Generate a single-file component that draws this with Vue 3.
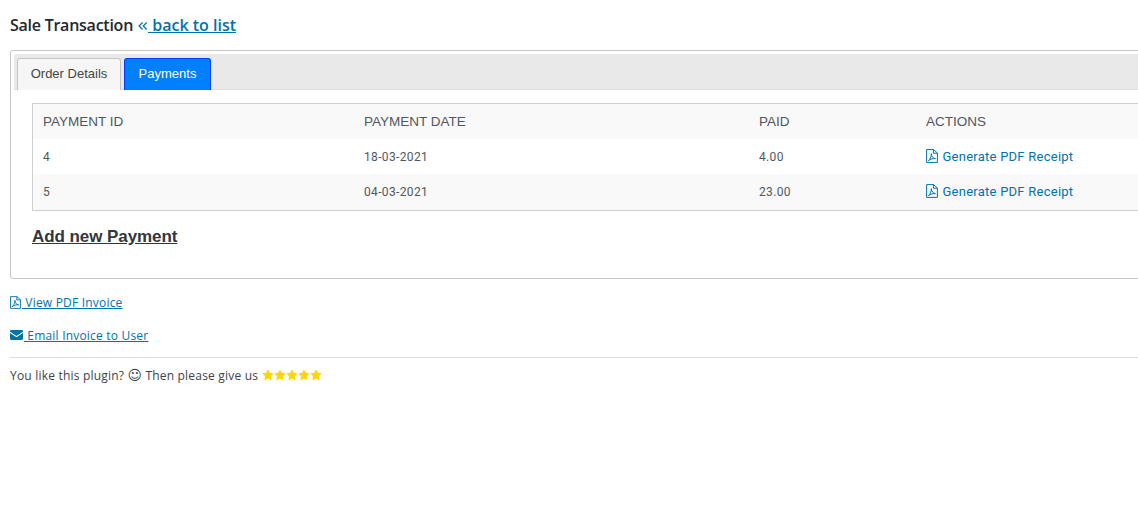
<template>
  <div class="page">
    <h2 class="title">
      <span class="label">Sale Transaction</span>
      <a href="#" class="back"><svg class="chev" viewBox="0 0 10 10"><path d="M4.600 1.500 1 5l3.600 3.500M8.800 1.500 5.200 5l3.600 3.500" /></svg> back to list</a>
    </h2>

    <div class="panel">
      <div class="tabs">
        <button
          v-for="tab in tabs"
          :key="tab"
          class="tab"
          :class="{ active: tab === activeTab }"
          @click="activeTab = tab"
        >
          {{ tab }}
        </button>
      </div>

      <div class="tab-body">
        <table class="grid">
          <thead>
            <tr>
              <th class="c1">PAYMENT ID</th>
              <th class="c2">PAYMENT DATE</th>
              <th class="c3">PAID</th>
              <th>ACTIONS</th>
            </tr>
          </thead>
          <tbody>
            <tr v-for="p in payments" :key="p.id">
              <td>{{ p.id }}</td>
              <td>{{ p.date }}</td>
              <td>{{ p.paid }}</td>
              <td>
                <a href="#" class="receipt">
                  <svg class="pdf" viewBox="0 0 12 14">
                    <path d="M.6.6h7l3.800 3.400v9.400H.6z M7.400.6v3.600h4" />
                    <path d="M2.400 11.600c1.600-1 3-4 3-7 0 3 1.600 4.600 4 5-2.500-.2-5 .4-7 2z" />
                  </svg>
                  Generate PDF Receipt
                </a>
              </td>
            </tr>
          </tbody>
        </table>

        <a href="#" class="add">Add new Payment</a>
      </div>
    </div>

    <p class="line first">
      <a href="#"><svg class="pdf small" viewBox="0 0 12 14">
        <path d="M.6.6h7l3.800 3.400v9.400H.6z M7.400.6v3.600h4" />
        <path d="M2.400 11.600c1.600-1 3-4 3-7 0 3 1.600 4.600 4 5-2.500-.2-5 .4-7 2z" />
      </svg> View PDF Invoice</a>
    </p>
    <p class="line second">
      <a href="#"><svg class="mail" viewBox="0 0 13 10">
        <path d="M0 1.200C0 .5.500 0 1.200 0h10.600c.7 0 1.200.5 1.200 1.200v.5L6.500 6 0 1.700z" />
        <path d="M0 3v5.800c0 .7.500 1.200 1.200 1.200h10.600c.7 0 1.200-.5 1.200-1.200V3L6.500 7.300z" />
      </svg> Email Invoice to User</a>
    </p>
    <hr class="rule" />
    <p class="thanks">
      You like this plugin?
      <span class="smile">☺</span>
      Then please give us
      <span class="stars">
        <svg v-for="n in 5" :key="n" class="star" viewBox="0 0 12 12">
          <path d="M6 .2l1.800 3.600 4.100.6-3 2.900.8 4.100L6 9.500l-3.700 1.900.8-4.100-3-2.900 4.100-.6z" />
        </svg>
      </span>
    </p>
  </div>
</template>

<script setup>
import { ref } from 'vue'

const tabs = ['Order Details', 'Payments']
const activeTab = ref('Payments')

const payments = [
  { id: 4, date: '18-03-2021', paid: '4.00' },
  { id: 5, date: '04-03-2021', paid: '23.00' }
]
</script>

<style>
html,
body {
  margin: 0;
  background: #fff;
  overflow: hidden;
}
</style>

<style scoped>
.page {
  width: 1138px;
  height: 524px;
  overflow: hidden;
  box-sizing: border-box;
  padding: 15px 0 0 10px;
  font-family: 'Open Sans', sans-serif;
  font-size: 12px;
  color: #333;
}

a {
  color: #0073aa;
}

.title {
  margin: 0 0 14px;
  font-size: 16px;
  line-height: 21px;
  font-weight: 600;
  color: #23282d;
}

.label {
  letter-spacing: -0.25px;
}

.back {
  margin-left: 5px;
  font-weight: 600;
}

.chev {
  width: 10px;
  height: 10px;
  fill: none;
  stroke: #0073aa;
  stroke-width: 1.2;
}

.panel {
  width: 1160px;
  height: 229px;
  box-sizing: border-box;
  border: 1px solid #c5c5c5;
  border-radius: 3px;
  padding: 3px;
  font-family: 'Liberation Sans', sans-serif;
}

.tabs {
  display: flex;
  gap: 3px;
  height: 36px;
  box-sizing: border-box;
  padding: 4px 0 0 3px;
  background: #e9e9e9;
  border-bottom: 1px solid #ddd;
  border-radius: 3px 3px 0 0;
}

.tab {
  width: 104px;
  height: 32px;
  margin: 0;
  box-sizing: border-box;
  border: 1px solid #c5c5c5;
  border-bottom: none;
  border-radius: 3px 3px 0 0;
  background: #f6f6f6;
  color: #454545;
  font-family: 'Liberation Sans', sans-serif;
  font-size: 13px;
  padding: 0 0 2px;
}

.tab.active {
  width: 87px;
  background: #007fff;
  border-color: #003eff;
  color: #fff;
}

.tab-body {
  padding: 13px 0 0 18px;
}

.grid {
  width: 1130px;
  border: 1px solid #ccd0d4;
  border-collapse: separate;
  border-spacing: 0;
  table-layout: fixed;
  font-family: 'Roboto', sans-serif;
  font-size: 12px;
  color: #50575e;
}

.grid th {
  height: 35px;
  padding: 0 10px;
  text-align: left;
  font-family: 'Liberation Sans', sans-serif;
  font-size: 13.5px;
  font-weight: 400;
  background: #f9f9f9;
}

.grid td {
  height: 35px;
  padding: 0 10px;
  letter-spacing: 0.35px;
}

.grid tbody tr:nth-child(even) td {
  height: 35px;
  padding-bottom: 1px;
  background: #f9f9f9;
}

.c1 {
  width: 301px;
}

.c2 {
  width: 375px;
}

.c3 {
  width: 147px;
}

.receipt {
  text-decoration: none;
  font-size: 13px;
  letter-spacing: 0.25px;
}

.pdf {
  width: 12px;
  height: 14px;
  fill: none;
  stroke: #0073aa;
  stroke-width: 1;
  vertical-align: -2px;
}

.receipt .pdf {
  margin-right: 1px;
}

.pdf.small {
  width: 11px;
  height: 13px;
  margin-right: 1px;
}

.mail {
  width: 13px;
  height: 10px;
  margin-right: 1px;
  fill: #0073aa;
}

.add {
  display: block;
  width: max-content;
  margin-top: 16px;
  font-size: 17px;
  line-height: 20px;
  font-weight: 700;
  letter-spacing: -0.07px;
  color: #32373c;
}

.line {
  margin: 0;
  line-height: 17px;
  letter-spacing: 0.2px;
}

.first {
  margin-top: 15px;
}

.second {
  margin-top: 16px;
}

.rule {
  margin: 13px 0 0;
  border: none;
  border-top: 1px solid #ddd;
}

.thanks {
  margin: 9px 0 0;
  line-height: 17px;
  letter-spacing: 0.2px;
  color: #3c434a;
}

.smile {
  font-family: 'DejaVu Sans', sans-serif;
  font-size: 14px;
  letter-spacing: 0;
}

.stars {
  display: inline-flex;
  vertical-align: -1px;
}

.star {
  width: 12px;
  height: 12px;
  fill: #ffd700;
}
</style>
